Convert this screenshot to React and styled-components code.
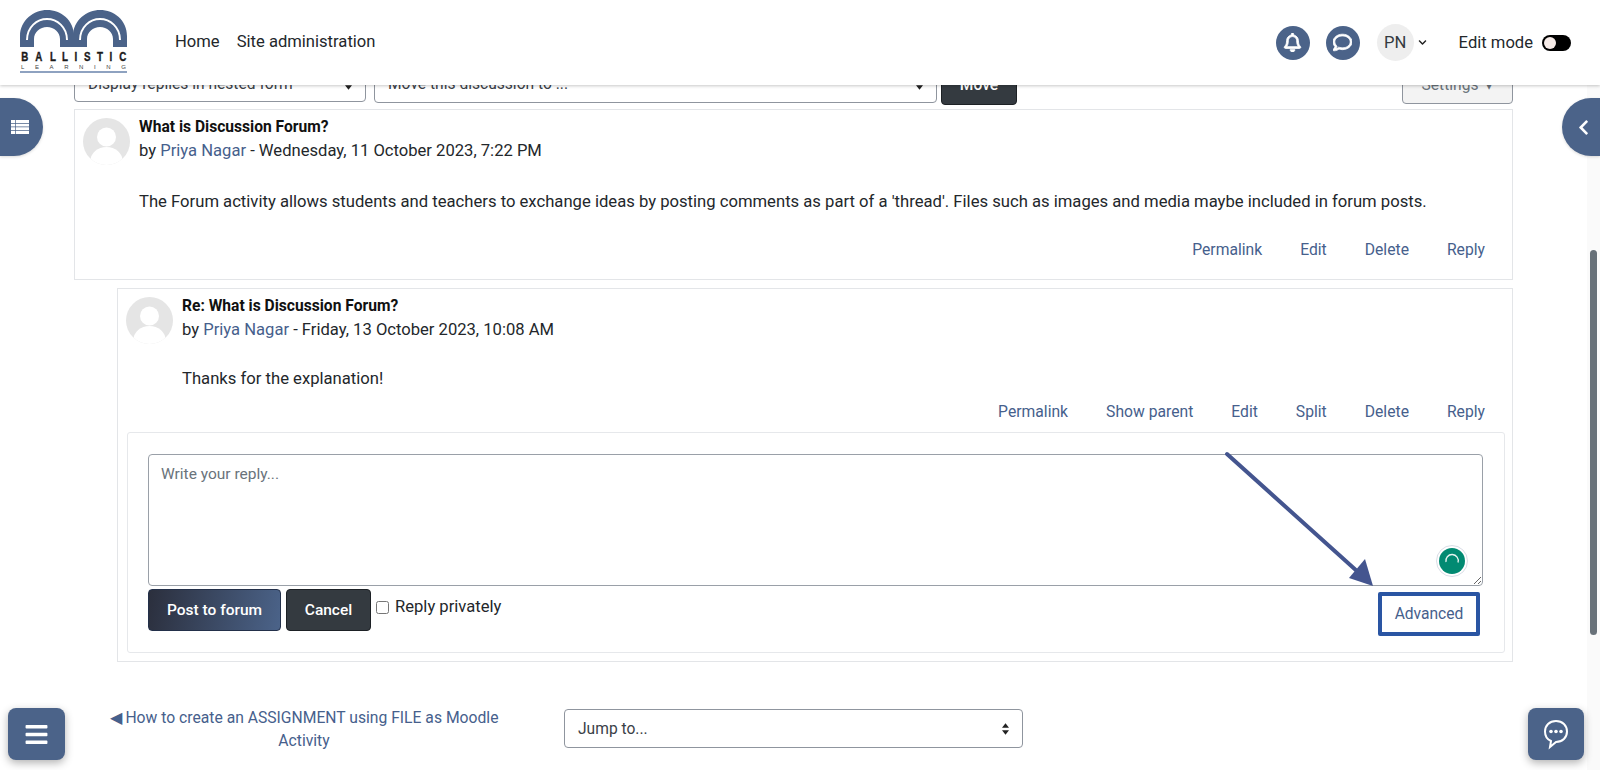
import React from 'react';
import styled, { createGlobalStyle } from 'styled-components';
import { FaRegBell, FaRegComment, FaBars, FaChevronLeft, FaChevronDown } from 'react-icons/fa';

const GlobalStyle = createGlobalStyle`
  html, body {
    margin: 0;
    height: 100%;
    overflow: hidden;
    background: #fff;
  }
  body {
    font-family: Roboto, "Liberation Sans", sans-serif;
    font-size: 15.6px;
    color: #1d2125;
  }
`;

const blue = '#4b6389';
const linkBlue = '#46608c';

const Page = styled.div`
  position: relative;
  width: 1600px;
  height: 770px;
  overflow: hidden;
`;

const Header = styled.header`
  position: relative;
  z-index: 5;
  height: 85px;
  display: flex;
  align-items: center;
  padding: 0 29px 0 20px;
  background: #fff;
  box-shadow: 0 1px 3px rgba(0, 0, 0, 0.22);
`;

const LogoWrap = styled.div`
  width: 107px;
  height: 66px;
  margin-right: 48px;
  display: flex;
  flex-direction: column;
`;

const LogoWord = styled.div`
  font-family: "Liberation Sans", sans-serif;
  font-weight: 700;
  font-size: 13px;
  line-height: 13px;
  margin-top: 3px;
  color: #1a1a1a;
  display: flex;
  justify-content: space-between;

  span {
    display: block;
    transform: scaleX(0.75);
    -webkit-text-stroke: 0.4px #1a1a1a;
  }
`;

const LogoSub = styled.div`
  font-family: "Liberation Sans", sans-serif;
  font-size: 6px;
  line-height: 8px;
  color: #444;
  display: flex;
  justify-content: space-between;
  padding: 0 1px;
  border-bottom: 2px solid #8ea2c0;
`;

const Nav = styled.nav`
  display: flex;
  gap: 17px;
  font-size: 16.6px;
  color: #23272b;
  margin-top: -2px;
`;

const HeaderRight = styled.div`
  margin-left: auto;
  display: flex;
  align-items: center;
`;

const RoundIcon = styled.div`
  width: 34px;
  height: 34px;
  border-radius: 50%;
  background: ${blue};
  color: #fff;
  font-size: 19px;
  display: flex;
  align-items: center;
  justify-content: center;
  margin-right: 16px;
`;

const UserPic = styled.div`
  width: 37px;
  height: 37px;
  margin-left: 1px;
  border-radius: 50%;
  background: #eee;
  font-size: 16.6px;
  display: flex;
  align-items: center;
  justify-content: center;
  color: #343a40;
`;

const Caret = styled.span`
  display: flex;
  font-size: 9px;
  margin: 0 0 0 4px;
  color: #222;
`;

const EditLabel = styled.span`
  margin-left: 32px;
  font-size: 16.6px;
  color: #23272b;
`;

const Toggle = styled.span`
  margin-left: 9px;
  width: 29px;
  height: 16px;
  border-radius: 8px;
  background: #000;
  display: flex;
  align-items: center;
  padding-left: 2px;
  box-sizing: border-box;

  &::before {
    content: '';
    width: 12px;
    height: 12px;
    border-radius: 50%;
    background: #f6ebe8;
  }
`;

const Main = styled.main`
  padding: 0 87px 0 74px;
`;

const Controls = styled.div`
  display: flex;
  align-items: flex-start;
  margin-top: -20px;
  height: 44px;
`;

const FakeSelect = styled.div`
  box-sizing: border-box;
  width: ${({ $w }) => $w}px;
  height: ${({ $h }) => $h || 38}px;
  margin-right: 8px;
  padding: 0 13px;
  border: 1px solid #8f959e;
  border-radius: 4px;
  background: #fff;
  display: flex;
  align-items: center;
  justify-content: space-between;
  font-size: 15.6px;
  color: #3a4047;
`;

const SelectArrows = styled.svg`
  width: 7px;
  height: 12px;
  flex: none;
`;

const MoveBtn = styled.button`
  box-sizing: border-box;
  width: 76px;
  height: 40px;
  margin-left: -4px;
  border: 1px solid #1d2125;
  border-radius: 4px;
  background: #343a40;
  color: #fff;
  font: 500 15.6px Roboto, sans-serif;
`;

const SettingsBtn = styled.div`
  box-sizing: border-box;
  width: 111px;
  height: 39px;
  margin-left: auto;
  border: 1px solid #8f959e;
  border-radius: 4px;
  background: #f3f3f3;
  color: #6a737b;
  font-size: 15.6px;
  display: flex;
  align-items: center;
  justify-content: center;
  gap: 7px;
`;

const Post = styled.article`
  box-sizing: border-box;
  border: 1px solid #e3e5e8;
  margin-left: ${({ $reply }) => ($reply ? '43px' : '0')};
  margin-bottom: 8px;
  padding: 8px;
  height: ${({ $h }) => $h}px;
`;

const PostHead = styled.div`
  display: flex;
  gap: 9px;
`;

const Avatar = styled.svg`
  width: 47px;
  height: 47px;
  flex: none;
`;

const PostTitle = styled.div`
  font-weight: 700;
  font-size: 15.6px;
  line-height: 18px;
  color: #111;
`;

const Byline = styled.div`
  font-size: 16.6px;
  line-height: 23px;
  margin-top: 3px;
  color: #23272b;
`;

const Link = styled.a`
  color: ${linkBlue};
`;

const PostBody = styled.p`
  margin: ${({ $top }) => $top}px 0 0 56px;
  font-size: 16.65px;
  line-height: 22px;
  color: #23272b;
`;

const Actions = styled.div`
  display: flex;
  justify-content: flex-end;
  gap: 38px;
  padding-right: 19px;
  margin-top: ${({ $top }) => $top}px;
  font-size: 15.7px;
  line-height: 22px;
  color: ${linkBlue};
`;

const ReplyForm = styled.div`
  position: relative;
  box-sizing: border-box;
  margin: 9px 0 0 1px;
  width: 1378px;
  height: 221px;
  padding: 21px 21px 0 20px;
  border: 1px solid #e6e8eb;
  border-radius: 3px;
`;

const TextWrap = styled.div`
  position: relative;
  height: 132px;
`;

const ReplyInput = styled.textarea`
  box-sizing: border-box;
  display: block;
  width: 100%;
  height: 132px;
  padding: 8px 12px;
  border: 1px solid #9aa0a8;
  border-radius: 4px;
  outline: 0;
  font: 15.5px/22px Roboto, sans-serif;
  resize: both;

  &::placeholder {
    color: #6a737b;
  }
`;

const GrammarlyBadge = styled.div`
  position: absolute;
  right: 15px;
  bottom: 9px;
  width: 32px;
  height: 32px;
  box-sizing: border-box;
  border-radius: 50%;
  border: 1px solid #d9dde6;
  background: #fff;
  display: flex;
  align-items: center;
  justify-content: center;
`;

const FormRow = styled.div`
  display: flex;
  align-items: flex-start;
  margin-top: 3px;
`;

const PrimaryBtn = styled.button`
  box-sizing: border-box;
  width: 133px;
  height: 42px;
  border: 1px solid #23304a;
  border-radius: 4px;
  background: linear-gradient(100deg, #2b2f3d 0%, ${blue} 100%);
  color: #fff;
  font: 500 15.5px Roboto, sans-serif;
`;

const CancelBtn = styled.button`
  box-sizing: border-box;
  width: 85px;
  height: 42px;
  margin-left: 5px;
  border: 1px solid #1d2125;
  border-radius: 4px;
  background: #343a40;
  color: #fff;
  font: 500 15.5px Roboto, sans-serif;
`;

const PrivateLabel = styled.label`
  display: flex;
  align-items: center;
  gap: 6px;
  margin: 8px 0 0 5px;
  font-size: 16.6px;
  line-height: 20px;
  color: #23272b;

  input {
    margin: 0;
    width: 13px;
    height: 13px;
  }
`;

const AdvancedBox = styled.a`
  box-sizing: border-box;
  margin: 3px 3px 0 auto;
  width: 102px;
  height: 44px;
  border: 4px solid #2a55a3;
  border-radius: 2px;
  display: flex;
  align-items: center;
  justify-content: center;
  font-size: 15.6px;
  color: ${linkBlue};
`;

const ArrowOverlay = styled.svg`
  position: absolute;
  left: 1090px;
  top: 14px;
  width: 160px;
  height: 145px;
  pointer-events: none;
`;

const BottomNav = styled.div`
  display: flex;
  align-items: flex-start;
  padding-left: 30px;
  margin-top: 44px;
`;

const PrevLink = styled.a`
  width: 400px;
  text-align: center;
  font-size: 15.7px;
  line-height: 23px;
  color: ${linkBlue};
`;

const JumpWrap = styled.div`
  margin: 3px 0 0 60px;
`;

const SidePill = styled.div`
  position: absolute;
  z-index: 4;
  top: 98px;
  ${({ $right }) => ($right ? 'right: 0; width: 38px; padding-left: 4px;' : 'left: 0; width: 43px; padding-right: 3px;')}
  box-sizing: border-box;
  height: 58px;
  background: ${blue};
  color: #fff;
  border-radius: ${({ $right }) => ($right ? '29px 0 0 29px' : '0 29px 29px 0')};
  display: flex;
  align-items: center;
  justify-content: center;
  font-size: 17px;
  box-shadow: 0 1px 3px rgba(0, 0, 0, 0.15);
`;

const FloatBtn = styled.div`
  position: absolute;
  z-index: 4;
  top: 708px;
  ${({ $right }) => ($right ? 'right: 16px; width: 56px;' : 'left: 8px; width: 57px;')}
  height: 52px;
  border-radius: 8px;
  background: ${blue};
  color: #fff;
  display: flex;
  align-items: center;
  justify-content: center;
  font-size: 25px;
  box-shadow: 0 3px 8px rgba(0, 0, 0, 0.3);
`;

const ScrollTrack = styled.div`
  position: absolute;
  top: 85px;
  right: 0;
  bottom: 0;
  width: 13px;
  background: #fafafa;
`;

const ScrollThumb = styled.div`
  position: absolute;
  top: 250px;
  right: 3px;
  width: 7px;
  height: 385px;
  border-radius: 4px;
  background: #687179;
`;

const Arrows = () => (
  <SelectArrows viewBox="0 0 8 13">
    <path d="M4 0 L8 5 L0 5 Z M4 13 L0 8 L8 8 Z" fill="#222" />
  </SelectArrows>
);

const UserAvatar = () => (
  <Avatar viewBox="0 0 47 47">
    <defs>
      <clipPath id="avatarClip">
        <circle cx="23.5" cy="23.5" r="23.5" />
      </clipPath>
    </defs>
    <g clipPath="url(#avatarClip)">
      <rect width="47" height="47" fill="#e5e5e5" />
      <circle cx="23.5" cy="19" r="9.5" fill="#fff" />
      <ellipse cx="23.5" cy="43" rx="16" ry="14" fill="#fff" />
    </g>
  </Avatar>
);

const Logo = () => (
  <LogoWrap>
    <svg width="107" height="37" viewBox="0 0 107 37">
      <path d="M0 37 V26 C0 10 14 0 27 0 C41 0 54 10 54 26 V37 H40 V29 C40 22 34 17 27 17 C20 17 14 22 14 29 V37 Z" fill={blue} />
      <path d="M53 37 V26 C53 10 67 0 80 0 C94 0 107 10 107 26 V37 H93 V29 C93 22 87 17 80 17 C73 17 67 22 67 29 V37 Z" fill={blue} />
      <path d="M7 30 C7 17 17 9 27 9 C37 9 47 17 47 30" fill="none" stroke="#fff" strokeWidth="2" />
      <path d="M60 30 C60 17 70 9 80 9 C90 9 100 17 100 30" fill="none" stroke="#fff" strokeWidth="2" />
    </svg>
    <LogoWord>{'BALLISTIC'.split('').map((c, i) => <span key={i}>{c}</span>)}</LogoWord>
    <LogoSub>{'LEARNING'.split('').map((c, i) => <span key={i}>{c}</span>)}</LogoSub>
  </LogoWrap>
);

const App = () => (
  <Page>
    <GlobalStyle />
    <Header>
      <Logo />
      <Nav>
        <span>Home</span>
        <span>Site administration</span>
      </Nav>
      <HeaderRight>
        <RoundIcon><FaRegBell stroke="currentColor" strokeWidth={22} /></RoundIcon>
        <RoundIcon><FaRegComment stroke="currentColor" strokeWidth={22} /></RoundIcon>
        <UserPic>PN</UserPic>
        <Caret><FaChevronDown /></Caret>
        <EditLabel>Edit mode</EditLabel>
        <Toggle />
      </HeaderRight>
    </Header>

    <Main>
      <Controls>
        <FakeSelect $w={292} $h={37}>
          Display replies in nested form
          <Arrows />
        </FakeSelect>
        <FakeSelect $w={563}>
          Move this discussion to ...
          <Arrows />
        </FakeSelect>
        <MoveBtn>Move</MoveBtn>
        <SettingsBtn>Settings <span>▾</span></SettingsBtn>
      </Controls>

      <Post $h={171}>
        <PostHead>
          <UserAvatar />
          <div>
            <PostTitle>What is Discussion Forum?</PostTitle>
            <Byline>by <Link>Priya Nagar</Link> - Wednesday, 11 October 2023, 7:22 PM</Byline>
          </div>
        </PostHead>
        <PostBody $top={26}>
          The Forum activity allows students and teachers to exchange ideas by posting comments as part of a 'thread'. Files such as images and media maybe included in forum posts.
        </PostBody>
        <Actions $top={26}>
          <span>Permalink</span>
          <span>Edit</span>
          <span>Delete</span>
          <span>Reply</span>
        </Actions>
      </Post>

      <Post $reply $h={374}>
        <PostHead>
          <UserAvatar />
          <div>
            <PostTitle>Re: What is Discussion Forum?</PostTitle>
            <Byline>by <Link>Priya Nagar</Link> - Friday, 13 October 2023, 10:08 AM</Byline>
          </div>
        </PostHead>
        <PostBody $top={24}>Thanks for the explanation!</PostBody>
        <Actions $top={11}>
          <span>Permalink</span>
          <span>Show parent</span>
          <span>Edit</span>
          <span>Split</span>
          <span>Delete</span>
          <span>Reply</span>
        </Actions>
        <ReplyForm>
          <TextWrap>
            <ReplyInput placeholder="Write your reply..." />
            <GrammarlyBadge>
              <svg width="26" height="26" viewBox="0 0 26 26">
                <circle cx="13" cy="13" r="13" fill="#028a72" />
                <path d="M7 14 A6.2 6.2 0 1 1 19 14.5" fill="none" stroke="#e8f4f1" strokeWidth="1.3" />
              </svg>
            </GrammarlyBadge>
          </TextWrap>
          <FormRow>
            <PrimaryBtn>Post to forum</PrimaryBtn>
            <CancelBtn>Cancel</CancelBtn>
            <PrivateLabel>
              <input type="checkbox" />
              Reply privately
            </PrivateLabel>
            <AdvancedBox>Advanced</AdvancedBox>
          </FormRow>
          <ArrowOverlay viewBox="0 0 160 145">
            <line x1="9" y1="7" x2="140" y2="125" stroke="#44558f" strokeWidth="4" strokeLinecap="round" />
            <polygon points="155,139 131,131 147,112" fill="#44558f" />
          </ArrowOverlay>
        </ReplyForm>
      </Post>

      <BottomNav>
        <PrevLink>◀ How to create an ASSIGNMENT using FILE as Moodle Activity</PrevLink>
        <JumpWrap>
          <FakeSelect $w={459} $h={39}>
            Jump to...
            <Arrows />
          </FakeSelect>
        </JumpWrap>
      </BottomNav>
    </Main>

    <ScrollTrack />
    <ScrollThumb />
    <SidePill>
      <svg width="18" height="14" viewBox="0 0 18 14" fill="#fff">
        <path d="M0 0 H18 V3 H0 Z M0 3.7 H18 V6.6 H0 Z M0 7.3 H18 V10.2 H0 Z M0 10.9 H18 V14 H0 Z" />
        <rect x="4" y="0" width="0.7" height="14" fill={blue} />
      </svg>
    </SidePill>
    <SidePill $right><FaChevronLeft /></SidePill>
    <FloatBtn><FaBars /></FloatBtn>
    <FloatBtn $right>
      <svg width="28" height="32" viewBox="0 0 28 32" fill="none">
        <path d="M14 3 C7.5 3 3 7.5 3 13.5 C3 18 5.5 21.5 9 23 L8 29 L14 24 C20.5 24 25 19.5 25 13.5 C25 7.5 20.5 3 14 3 Z" stroke="#fff" strokeWidth="2" />
        <circle cx="9" cy="13.5" r="1.8" fill="#fff" />
        <circle cx="14" cy="13.5" r="1.8" fill="#fff" />
        <circle cx="19" cy="13.5" r="1.8" fill="#fff" />
      </svg>
    </FloatBtn>
  </Page>
);

export default App;
